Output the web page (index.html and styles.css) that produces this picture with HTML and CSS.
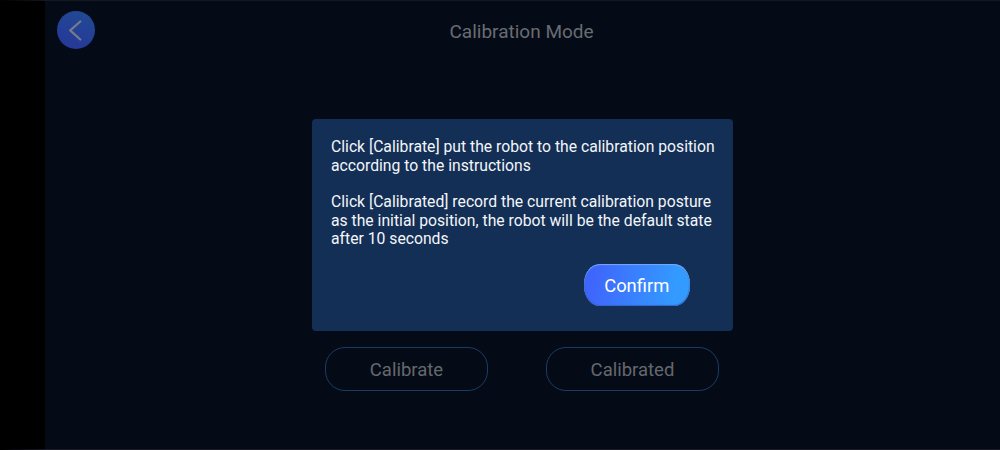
FILE: index.html
```html
<!DOCTYPE html>
<html lang="en">
<head>
<meta charset="utf-8">
<title>Calibration Mode</title>
<link rel="stylesheet" href="styles.css">
</head>
<body>
<main class="screen">
  <header class="topbar">
    <button class="back" aria-label="Back">
      <svg class="back-icon" viewBox="0 0 38 38"><path d="M23.3 10.5 13.2 19.3 23.3 28.5"/></svg>
    </button>
    <h1 class="title">Calibration Mode</h1>
  </header>
  <div class="actions">
    <button class="outline calibrate">Calibrate</button>
    <button class="outline calibrated">Calibrated</button>
  </div>
  <section class="dialog" role="dialog">
    <p class="message"><span class="line">Click [Calibrate] put the robot to the calibration position</span><span class="line">according to the instructions</span></p>
    <p class="message"><span class="line">Click [Calibrated] record the current calibration posture</span><span class="line">as the initial position, the robot will be the default state</span><span class="line">after 10 seconds</span></p>
    <button class="confirm">Confirm</button>
  </section>
</main>
</body>
</html>
```
FILE: styles.css
```css
* { box-sizing: border-box; }
body { margin: 0; background: #000; font-family: Roboto, "Liberation Sans", sans-serif; }
button { font: inherit; padding: 0; margin: 0; }
.screen {
  position: relative;
  width: 1000px;
  height: 450px;
  border-left: 45px solid #000;
  border-top: 1px solid #131822;
  border-bottom: 1px solid #1b1826;
  background: #040b16;
  display: flex;
  flex-direction: column;
  justify-content: space-between;
  overflow: hidden;
}
.topbar { display: flex; padding: 10px 0 0 12px; }
.back {
  width: 38px;
  height: 38px;
  border: 0;
  border-radius: 50%;
  background: linear-gradient(200deg, #214b93, #26369a);
}
.back-icon { display: block; width: 38px; height: 38px; fill: none; stroke: #757b88; stroke-width: 2.3; stroke-linecap: round; stroke-linejoin: round; }
.title { margin: 10px 0 0 354.5px; font-size: 19px; line-height: 22px; font-weight: 400; color: #696c71; white-space: nowrap; }
.actions { display: flex; gap: 58px; padding: 0 0 58px 280px; }
.outline {
  height: 44px;
  padding-top: 1px;
  border: 1px solid #1a3b69;
  border-radius: 20px;
  background: transparent;
  color: #65686d;
  font-size: 18.5px;
}
.calibrate { width: 163px; }
.calibrated { width: 173px; }
.dialog {
  position: absolute;
  left: 267px;
  top: 118px;
  width: 420.5px;
  height: 212px;
  padding: 19.3px 19px 0;
  border-radius: 4px;
  background: #142f55;
  color: #f3f6fa;
  display: flex;
  flex-direction: column;
}
.message { margin: 0 0 18px; font-size: 15.72px; line-height: 18.4px; white-space: nowrap; }
.line { display: block; }
.confirm {
  align-self: flex-end;
  width: 105.5px;
  height: 42px;
  margin: -2.3px 24px 0 0;
  padding-top: 1px;
  border: 0;
  border-radius: 16px / 20px;
  background: linear-gradient(100deg, #3f66fc 10%, #339bff 85%);
  box-shadow: inset 0 1px 1px #7ba9f6, inset 0 -1px 1px #3567c9, inset 1px 0 1px #3b62d4, inset -1px 0 1px #3b83d8;
  color: #fff;
  font-size: 18.4px;
}
```
